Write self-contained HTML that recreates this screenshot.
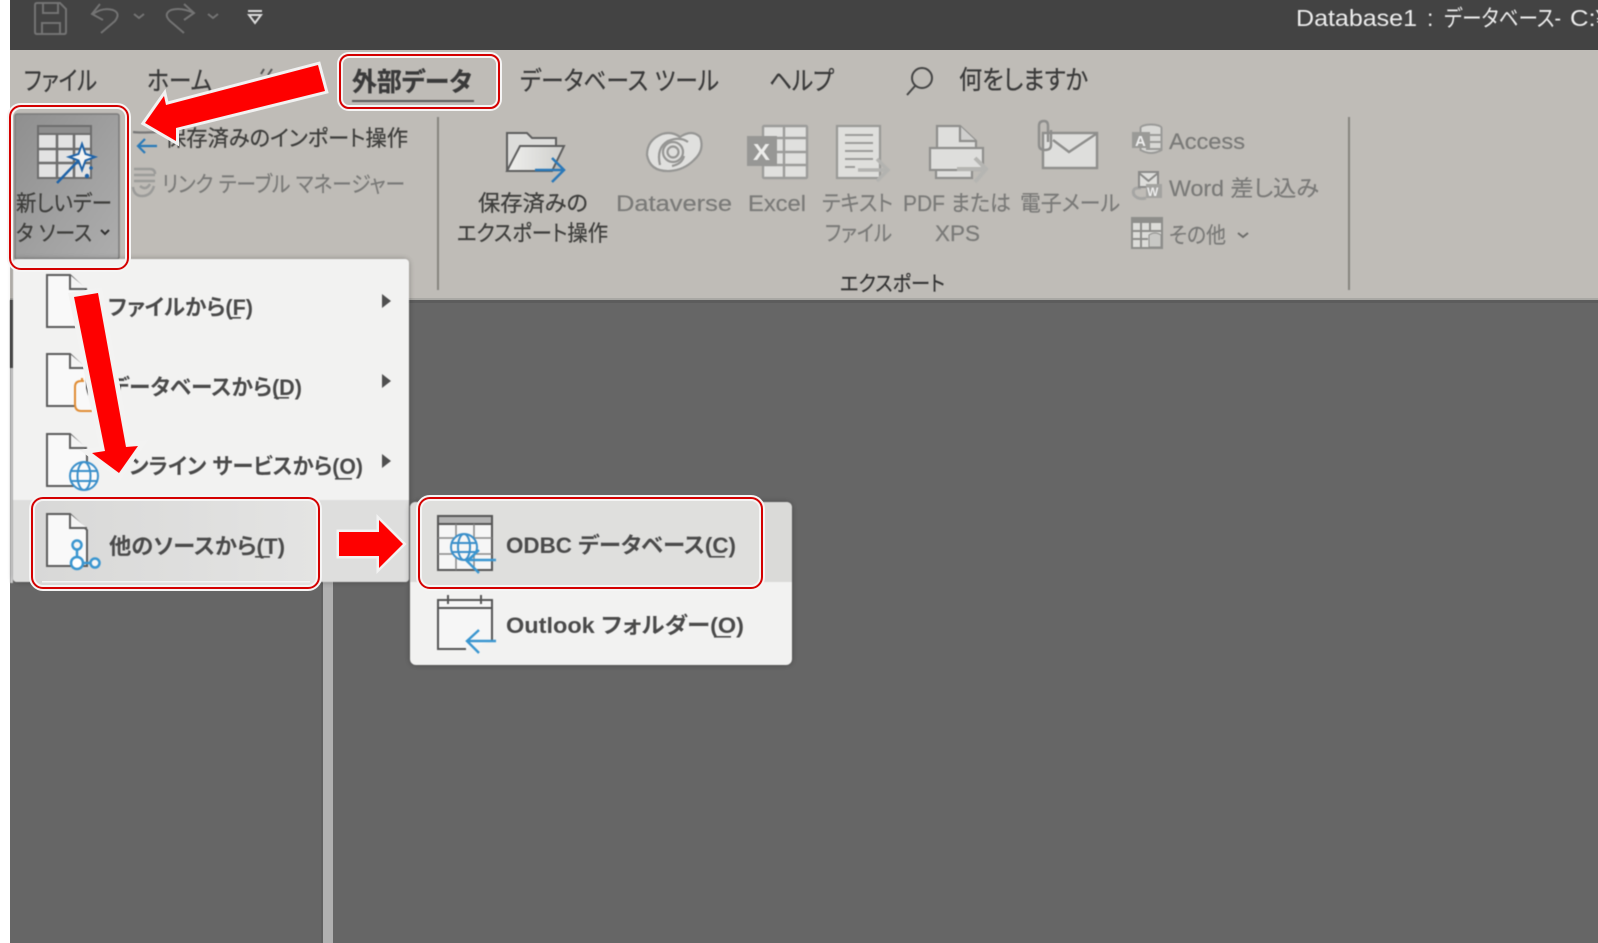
<!DOCTYPE html>
<html lang="ja"><head><meta charset="utf-8"><title>Database1</title>
<style>
html,body{margin:0;padding:0;background:#fff;width:1598px;height:943px;overflow:hidden}
svg{display:block}
text{font-family:"Liberation Sans","Noto Sans CJK JP",sans-serif;font-feature-settings:"palt";white-space:pre}
.soft{filter:blur(.5px)}
.tab{font-size:26px;fill:#3a3a3a;stroke:#3a3a3a;stroke-width:.25px}
.rb{font-size:22px;fill:#3e3e3c;stroke:#3e3e3c;stroke-width:.25px}
.dis{font-size:22px;fill:#7a7a78;stroke:#7a7a78;stroke-width:.2px}
.mn{font-size:22px;font-weight:700;fill:#4a4a4a}
</style></head><body>
<svg width="1598" height="943" viewBox="0 0 1598 943" xmlns="http://www.w3.org/2000/svg">
<defs>
<linearGradient id="btn" x1="0" y1="0" x2="1" y2="1"><stop offset="0" stop-color="#8f8f8f"/><stop offset=".6" stop-color="#a2a2a2"/><stop offset="1" stop-color="#adadad"/></linearGradient>
<linearGradient id="row" x1="0" y1="0" x2="1" y2="0"><stop offset="0" stop-color="#d8d8d7"/><stop offset="1" stop-color="#e4e4e3"/></linearGradient>
<linearGradient id="fold" x1="0" y1="0" x2="1" y2="0"><stop offset="0" stop-color="#efefed"/><stop offset="1" stop-color="#cfcfcc"/></linearGradient>
<filter id="sh" x="-10%" y="-10%" width="120%" height="120%"><feGaussianBlur stdDeviation="3"/></filter>
</defs>

<rect width="1598" height="943" fill="#fff"/>
<rect x="10" y="0" width="1588" height="943" fill="#666666"/>
<rect x="10" y="0" width="1588" height="50" fill="#434343"/>
<rect x="10" y="50" width="1588" height="250" fill="#bfbcb7"/>
<rect x="10" y="298" width="1588" height="2" fill="#a9a8a4"/>
<rect x="10" y="300" width="1588" height="3" fill="#5c5c5c"/>
<rect x="323" y="580" width="10" height="363" fill="#b0b0b0"/>
<rect x="321" y="580" width="2" height="363" fill="#5f5f5f"/>

<g class="soft">
<!-- QAT -->
<g fill="none" stroke="#747474" stroke-width="2">
<path d="M35 5 Q35 3 37 3 H60 L66 9 V32 Q66 34 64 34 H37 Q35 34 35 32 Z"/>
<path d="M43 3 V13 H58 V3"/>
<path d="M42 34 V23 H60 V34"/>
<path d="M101 33 L115 21 Q121 13 113 10 Q103 7 93 14"/>
<path d="M100 4 L92 14 L103 20"/>
<path d="M134 14 L139 18 L144 14"/>
<path d="M184 33 L170 21 Q163 14 171 10 Q181 7 194 13"/>
<path d="M184 4 L194 13 L184 20"/>
<path d="M208 14 L213 18 L218 14"/>
</g>
<path d="M248 11 H262" stroke="#dcdcdc" stroke-width="2"/>
<path d="M249 15 H261 L255 23 Z" fill="none" stroke="#dcdcdc" stroke-width="2"/>

<!-- Title -->
<g font-size="23" fill="#ededed">
<text x="1296" y="26" textLength="121" lengthAdjust="spacingAndGlyphs">Database1</text>
<text x="1427" y="26">:</text>
<text x="1444" y="26" textLength="117" lengthAdjust="spacingAndGlyphs">データベース-</text>
<text x="1570" y="26" textLength="40" lengthAdjust="spacingAndGlyphs">C:¥</text>
</g>

<!-- Tabs -->
<text class="tab" x="24" y="90" textLength="73" lengthAdjust="spacingAndGlyphs">ファイル</text>
<text class="tab" x="147" y="90" textLength="65" lengthAdjust="spacingAndGlyphs">ホーム</text>
<path d="M261 74 L264 69 M268 75 L272 69" stroke="#555" stroke-width="2" fill="none"/>
<text class="tab" x="352" y="91" textLength="120" lengthAdjust="spacingAndGlyphs" font-weight="700" fill="#2f2f2f">外部データ</text>
<rect x="352" y="100" width="122" height="2" fill="#5a5a5a"/>
<text class="tab" x="520" y="90" textLength="199" lengthAdjust="spacingAndGlyphs">データベース ツール</text>
<text class="tab" x="769" y="90" textLength="65" lengthAdjust="spacingAndGlyphs">ヘルプ</text>
<g fill="none" stroke="#444" stroke-width="2"><circle cx="922" cy="78" r="10"/><path d="M915 86 L907 95"/></g>
<text class="tab" x="959" y="89" textLength="129" lengthAdjust="spacingAndGlyphs">何をしますか</text>

<!-- Separators -->
<rect x="437" y="117" width="2" height="173" fill="#85847f"/>
<rect x="1348" y="117" width="2" height="173" fill="#85847f"/>

<!-- Data source button -->
<rect x="15" y="114" width="104" height="145" rx="2" fill="url(#btn)" stroke="#7b7b7b" stroke-width="1.5"/>
<g>
<rect x="38" y="126" width="53" height="52" fill="#e2e2e2" stroke="#6d6d6d" stroke-width="2"/>
<rect x="38" y="126" width="53" height="8" fill="#8f8f8f" stroke="#6d6d6d" stroke-width="2"/>
<path d="M57 134 V178 M74 134 V178 M38 149 H91 M38 163 H91" stroke="#6d6d6d" stroke-width="2.5" fill="none"/>
<path d="M57 183 L78 161" stroke="#1f63a8" stroke-width="2.5"/>
<path d="M82 144 L85.5 154 L95 157 L85.5 160.5 L82 170 L78.5 160.5 L69 157 L78.5 154 Z" fill="#f5f5f5" stroke="#1f63a8" stroke-width="2"/>
<circle cx="91" cy="168" r="1.8" fill="#1f63a8"/><circle cx="87" cy="176" r="2.2" fill="#1f63a8"/>
</g>
<text class="rb" x="16" y="211" textLength="96" lengthAdjust="spacingAndGlyphs" fill="#2e2e2e">新しいデー</text>
<text class="rb" x="16" y="241" textLength="76" lengthAdjust="spacingAndGlyphs" fill="#2e2e2e">タ ソース</text>
<path d="M101 230 L105 234 L109 230" fill="none" stroke="#2e2e2e" stroke-width="2"/>

<!-- Import actions -->
<g fill="none" stroke-width="2.2">
<path d="M133 132 Q140 133 157 132 M150 126 L157 132" stroke="#777"/>
<path d="M157 146 H138 M145 139 L138 146 L145 153" stroke="#2a7ab8"/>
</g>
<text class="rb" x="165" y="146" textLength="243" lengthAdjust="spacingAndGlyphs">保存済みのインポート操作</text>
<g fill="none" stroke="#9b9b99" stroke-width="2.5">
<path d="M134 169 H150 Q155 169 155 174 M134 175 H155 M134 181 H155"/>
<path d="M154 186 Q151 196 142 196 Q134 196 133 187 M140 186 Q146 191 150 184" />
</g>
<text class="dis" x="162" y="192" textLength="243" lengthAdjust="spacingAndGlyphs">リンク テーブル マネージャー</text>

<!-- Export: saved -->
<g>
<path d="M507 171 V133 H527 L532 138 H556 V146" fill="#dcdcda" stroke="#5e5e5e" stroke-width="2"/>
<path d="M507 171 L520 146 H564 L552 171 Z" fill="url(#fold)" stroke="#5e5e5e" stroke-width="2"/>
<path d="M535 170 H564 M552 158 L564 170 L552 182" fill="none" stroke="#2a78b8" stroke-width="2.5"/>
</g>
<text class="rb" x="478" y="211" textLength="110" lengthAdjust="spacingAndGlyphs">保存済みの</text>
<text class="rb" x="457" y="241" textLength="151" lengthAdjust="spacingAndGlyphs">エクスポート操作</text>

<!-- Dataverse -->
<g fill="none" stroke="#969694" stroke-width="2.2">
<path d="M647 155 Q647 140 662 134 Q672 131 680 137 Q692 129 700 137 Q705 150 694 160 Q684 170 670 171 Q650 172 647 155 Z" fill="#e0e0de"/>
<path d="M660 165 Q656 148 668 141 Q680 136 688 142"/>
<circle cx="673" cy="152" r="10" fill="#dededc"/>
<circle cx="673" cy="152" r="5.5"/>
<path d="M684 156 Q682 164 672 166"/>
</g>
<text class="dis" x="616" y="211" textLength="116" lengthAdjust="spacingAndGlyphs">Dataverse</text>

<!-- Excel -->
<g>
<rect x="763" y="126" width="44" height="52" rx="1" fill="#e0e0de" stroke="#9c9c9a" stroke-width="2.4"/>
<path d="M784 126 V178 M763 138 H807 M763 152 H807 M763 165 H807" stroke="#9c9c9a" stroke-width="2.4" fill="none"/>
<rect x="747" y="136" width="30" height="30" fill="#979795"/>
<text x="753" y="160" font-size="23" font-weight="700" fill="#ececea" textLength="17" lengthAdjust="spacingAndGlyphs">X</text>
</g>
<text class="dis" x="748" y="211" textLength="58" lengthAdjust="spacingAndGlyphs">Excel</text>

<!-- Text file -->
<g>
<rect x="837" y="126" width="43" height="52" fill="#dfdfdc" stroke="#999997" stroke-width="2.2"/>
<path d="M845 135 H873 M845 143 H873 M845 151 H873 M845 159 H873 M845 167 H855" stroke="#9c9c9a" stroke-width="2" fill="none"/>
<path d="M858 170 H888 M877 159 L888 170 L877 181" fill="none" stroke="#b3b3b0" stroke-width="3.5"/>
</g>
<text class="dis" x="822" y="211" textLength="71" lengthAdjust="spacingAndGlyphs">テキスト</text>
<text class="dis" x="825" y="241" textLength="67" lengthAdjust="spacingAndGlyphs">ファイル</text>

<!-- PDF -->
<g fill="#dededc" stroke="#8f8f8d" stroke-width="2.2">
<path d="M937 148 V126 H960 L976 141 V148"/>
<path d="M960 126 V141 H976" fill="#cfcfcd"/>
<rect x="936" y="168" width="36" height="10"/>
<rect x="930" y="148" width="53" height="22"/>
</g>
<path d="M957 169 H986 M975 158 L986 169 L975 182" fill="none" stroke="#b5b5b2" stroke-width="4"/>
<text class="dis" x="903" y="211" textLength="108" lengthAdjust="spacingAndGlyphs">PDF または</text>
<text class="dis" x="935" y="241" textLength="45" lengthAdjust="spacingAndGlyphs">XPS</text>

<!-- Mail -->
<g stroke="#8e8e8c" stroke-width="2.4">
<rect x="1043" y="133" width="54" height="35" fill="#dededc"/>
<path d="M1053 140 L1069 152 L1096 134" fill="none"/>
<path d="M1048 142 V126 Q1048 121 1044 121 Q1039 121 1039 126 V145 Q1039 150 1045 150 Q1051 150 1051 145 V130" fill="none"/>
</g>
<text class="dis" x="1020" y="211" textLength="100" lengthAdjust="spacingAndGlyphs">電子メール</text>

<!-- Access -->
<g>
<ellipse cx="1151" cy="128" rx="10.5" ry="3.5" fill="#d8d8d5" stroke="#9a9a98" stroke-width="2"/>
<path d="M1140.5 128 V150 Q1151 156 1161.5 150 V128" fill="#d8d8d5" stroke="#9a9a98" stroke-width="2"/>
<path d="M1150 135 H1161 M1150 142 H1161 M1146 149 H1161" stroke="#9a9a98" stroke-width="2" fill="none"/>
<rect x="1132" y="132" width="18" height="16" fill="#9a9a97"/>
<text x="1135" y="146" font-size="15" font-weight="700" fill="#eee">A</text>
</g>
<text class="dis" x="1169" y="149" textLength="76" lengthAdjust="spacingAndGlyphs">Access</text>

<!-- Word -->
<g>
<path d="M1141 188 Q1131 187 1134 195 Q1138 200 1146 198" fill="none" stroke="#a5a5a3" stroke-width="3"/>
<rect x="1139" y="172" width="19" height="15" fill="#dededb" stroke="#8a8a88" stroke-width="2"/>
<path d="M1139 173 L1148.5 181 L1158 173" fill="none" stroke="#8a8a88" stroke-width="2"/>
<rect x="1146" y="184" width="16" height="14" fill="#a3a3a0"/>
<text x="1147" y="196" font-size="12" font-weight="700" fill="#eee">W</text>
</g>
<text class="dis" x="1169" y="196" textLength="150" lengthAdjust="spacingAndGlyphs">Word 差し込み</text>

<!-- Other -->
<g>
<rect x="1132" y="218" width="30" height="30" fill="#dcdcd9" stroke="#8e8e8b" stroke-width="2"/>
<rect x="1132" y="218" width="30" height="5" fill="#8e8e8b"/>
<path d="M1141 223 V248 M1150 223 V232 M1132 231 H1162 M1132 239 H1148" stroke="#8e8e8b" stroke-width="2" fill="none"/>
<path d="M1149 235 Q1155 231 1161 235 V247 H1149 Z" fill="#c8c8c5" stroke="#8e8e8b" stroke-width="1"/>
</g>
<text class="dis" x="1169" y="243" textLength="57" lengthAdjust="spacingAndGlyphs">その他</text>
<path d="M1238 233 L1243 237 L1248 233" fill="none" stroke="#6d6d6b" stroke-width="2"/>

<text x="840" y="291" font-size="21" fill="#333" stroke="#333" stroke-width=".2" textLength="105" lengthAdjust="spacingAndGlyphs">エクスポート</text>

<!-- left strip behind menu -->
<rect x="10" y="300" width="3" height="68" fill="#4f4f4f"/>
<rect x="10" y="368" width="3" height="215" fill="#cfcfcf"/>

<!-- Menu 1 -->
<rect x="13" y="259" width="396" height="323" rx="5" fill="#000" opacity=".3" filter="url(#sh)"/>
<rect x="13" y="259" width="396" height="323" rx="4" fill="#f2f2f1"/>
<path d="M13 500 H409 V578 Q409 582 405 582 H17 Q13 582 13 578 Z" fill="#dededd"/>

<g fill="#f9f9f9" stroke="#5c5c5c" stroke-width="2">
<g transform="translate(46,274)"><path d="M24 1 H1 V53 H41 V17 Z"/><path d="M24 1 V15 H41" fill="#f4f4f4"/></g>
<g transform="translate(46,353)"><path d="M24 1 H1 V53 H41 V17 Z"/><path d="M24 1 V15 H41" fill="#f4f4f4"/></g>
<g transform="translate(46,433)"><path d="M24 1 H1 V53 H41 V17 Z"/><path d="M24 1 V15 H41" fill="#f4f4f4"/></g>
</g>
<path d="M92 411 H81 Q75 411 75 404 V387 Q75 381 81 381 H84 M82 378 V381" fill="#f9f9f9" stroke="#e08c33" stroke-width="2"/>
<g fill="#fafafa" stroke="#3a8fca" stroke-width="2">
<circle cx="84" cy="476" r="14"/>
<ellipse cx="84" cy="476" rx="6.5" ry="14"/>
<path d="M70 471 H98 M70 481 H98" fill="none"/>
</g>

<text class="mn" x="108" y="315" textLength="145" lengthAdjust="spacingAndGlyphs">ファイルから(F)</text>
<rect x="230" y="317" width="11" height="1.6" fill="#4a4a4a"/>
<text class="mn" x="109" y="395" textLength="193" lengthAdjust="spacingAndGlyphs">データベースから(D)</text>
<rect x="274" y="397" width="15" height="1.6" fill="#4a4a4a"/>
<text class="mn" x="109" y="474" textLength="254" lengthAdjust="spacingAndGlyphs">オンライン サービスから(O)</text>
<rect x="335" y="478" width="17" height="1.6" fill="#4a4a4a"/>
<path d="M382 294 L391 301 L382 308 Z M382 374 L391 381 L382 388 Z M382 454 L391 461 L382 468 Z" fill="#4f4f4f"/>

<!-- Menu 2 -->
<rect x="410" y="502" width="382" height="163" rx="6" fill="#000" opacity=".3" filter="url(#sh)"/>
<rect x="410" y="502" width="382" height="163" rx="6" fill="#f2f2f1"/>
<path d="M410 508 Q410 502 416 502 H786 Q792 502 792 508 V582 H410 Z" fill="#dadad8"/>
</g>

<!-- Highlight frames -->
<g fill="none">
<rect x="340" y="55" width="159" height="53" rx="9" stroke="#f5f5f5" stroke-width="6"/>
<rect x="340" y="55" width="159" height="53" rx="9" stroke="#d40000" stroke-width="2"/>
<rect x="10" y="106" width="118" height="163" rx="11" stroke="#f5f5f5" stroke-width="6"/>
<rect x="10" y="106" width="118" height="163" rx="11" stroke="#d40000" stroke-width="2"/>
</g>
<rect x="32" y="498" width="287" height="90" rx="11" fill="url(#row)" stroke="#f5f5f5" stroke-width="6"/>
<rect x="32" y="498" width="287" height="90" rx="11" fill="none" stroke="#d40000" stroke-width="2"/>
<rect x="419" y="498" width="343" height="90" rx="11" fill="#dfdfdd" stroke="#f5f5f5" stroke-width="6"/>
<rect x="419" y="498" width="343" height="90" rx="11" fill="none" stroke="#d40000" stroke-width="2"/>
<rect x="42" y="581" width="268" height="1.5" fill="#f3f3f3"/>

<g class="soft">
<!-- Other sources item -->
<g fill="#f9f9f9" stroke="#5c5c5c" stroke-width="2" transform="translate(46,513)">
<path d="M24 1 H1 V53 H41 V17 Z"/><path d="M24 1 V15 H41" fill="#f4f4f4"/>
</g>
<g stroke="#3a96d0" stroke-width="2.5" fill="#f5f5f5">
<path d="M77 548 V560 M82 563 H90" fill="none"/>
<circle cx="77" cy="545" r="4.5"/>
<circle cx="77" cy="563" r="6" fill="#fff"/>
<circle cx="95" cy="563" r="4.5"/>
</g>
<text class="mn" x="109" y="554" textLength="176" lengthAdjust="spacingAndGlyphs">他のソースから(T)</text>
<rect x="255" y="556" width="15" height="1.6" fill="#4a4a4a"/>

<!-- ODBC item -->
<g>
<rect x="438" y="516" width="54" height="54" fill="#f6f6f6" stroke="#555" stroke-width="2"/>
<rect x="438" y="516" width="54" height="8" fill="#b4b4b4" stroke="#555" stroke-width="2"/>
<path d="M456 524 V570 M474 524 V570 M438 538 H492 M438 554 H492" stroke="#888" stroke-width="1.5" fill="none"/>
<g fill="#f6f6f6" stroke="#3a8fca" stroke-width="2">
<circle cx="464" cy="547" r="13"/>
<ellipse cx="464" cy="547" rx="6" ry="13"/>
<path d="M451 543 H477 M451 552 H477" fill="none"/>
</g>
<path d="M496 560 H467 M479 550 L467 561 L479 573" fill="none" stroke="#3a96d0" stroke-width="2.4"/>
</g>
<text class="mn" x="506" y="553" textLength="230" lengthAdjust="spacingAndGlyphs">ODBC データベース(C)</text>
<rect x="710" y="556" width="15" height="1.6" fill="#4a4a4a"/>

<!-- Outlook item -->
<g>
<path d="M466 649 H438 V600 H492 V641" fill="#f6f6f6" stroke="#555" stroke-width="2"/>
<path d="M438 608 H492 M448 595 V604 M481 595 V604" stroke="#555" stroke-width="2" fill="none"/>
<path d="M496 641 H467 M479 630 L467 641 L479 653" fill="none" stroke="#3a96d0" stroke-width="2.4"/>
</g>
<text class="mn" x="506" y="633" textLength="238" lengthAdjust="spacingAndGlyphs">Outlook フォルダー(O)</text>
<rect x="714" y="636" width="17" height="1.6" fill="#4a4a4a"/>
</g>

<!-- Red arrows -->
<g fill="#fe0000" stroke="#f2f2f2" stroke-width="6" paint-order="stroke" stroke-linejoin="miter">
<path d="M318 65 L325 91 L176 128 L176 141 L145 123 L164 96 L166 105 Z"/>
</g>
<path d="M339 532 H379 V520 L403 544 L379 568 V556 H339 Z" fill="#fe0000" stroke="#f2f2f2" stroke-width="5" paint-order="stroke"/>
<path d="M74 297 L98 293 L126 447 L138 446 L119 473 L92 453 L105 451 Z" fill="#fe0000" stroke="#f3f3f2" stroke-width="10" paint-order="stroke"/>
</svg>
</body></html>
